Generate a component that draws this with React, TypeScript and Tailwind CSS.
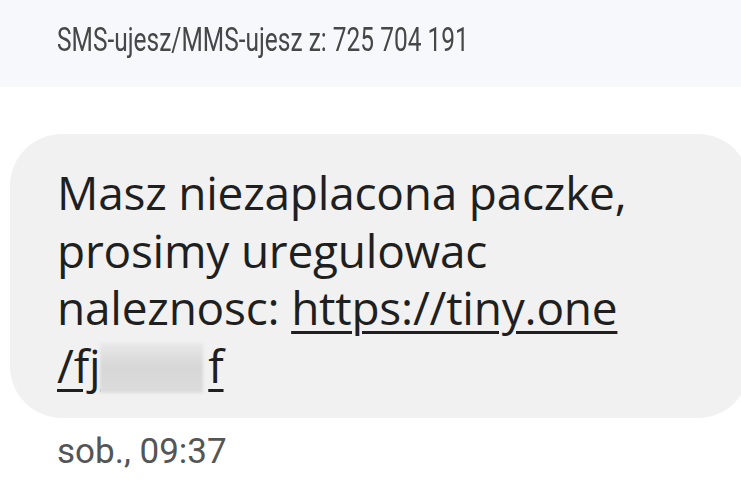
import React from 'react';

export default function App() {
  return (
    <div className="w-[741px] h-[486px] overflow-hidden bg-white font-['Roboto',sans-serif] select-none">
      {/* naglowek z numerem nadawcy */}
      <div className="h-[87px] bg-[#f6f8fb] flex items-center pl-[57px]">
        <p className="text-[34px] text-[#474747] leading-none -mt-[9px] whitespace-nowrap origin-left scale-x-[0.72]">
          SMS-ujesz/MMS-ujesz z: 725 704 191
        </p>
      </div>

      <div className="pt-[47px] pl-[10px]">
        {/* dymek wiadomosci */}
        <div className="bg-[#f1f1f1] rounded-[52px] w-[740px] h-[284px] pl-[47px] pt-[30px]">
          <p className="text-[46px] leading-[57.5px] text-[#1f1f1f] font-['Open_Sans',sans-serif] tracking-[-0.005em]">
            Masz niezaplacona paczke,
            <br />
            prosimy uregulowac
            <br />
            naleznosc:{' '}
            <span className="underline decoration-[3px] underline-offset-[6px]">https://tiny.one</span>
            <br />
            <span className="relative inline-block underline decoration-[3px] underline-offset-[6px]">
              /fj<span className="inline-block w-[108px]">s</span>f
              <span className="absolute left-[43px] top-[6px] w-[103px] h-[50px] bg-gradient-to-b from-[#e8e8e8] via-[#d6d6d6] to-[#dcdcdc] blur-[1.5px]" />
            </span>
          </p>
        </div>

        <p className="pl-[47px] pt-[16px] text-[35px] leading-none text-[#555555]">sob., 09:37</p>
      </div>
    </div>
  );
}
